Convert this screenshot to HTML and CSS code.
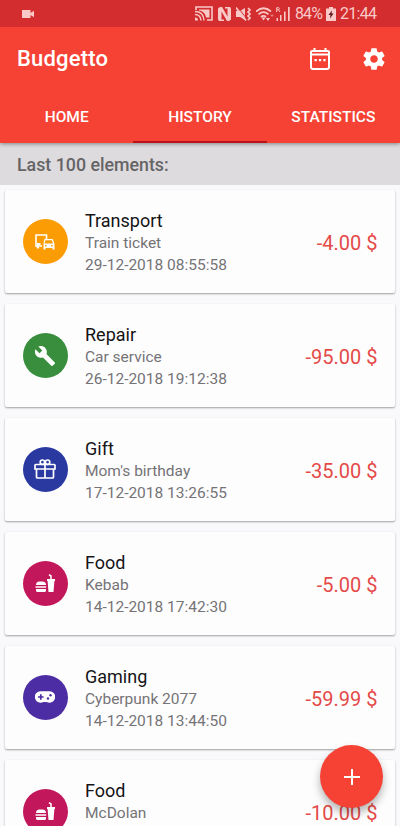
FILE: index.html
```html
<!DOCTYPE html>
<html lang="en">
<head>
<meta charset="utf-8">
<title>Budgetto</title>
<link rel="stylesheet" href="styles.css">
</head>
<body>
<div class="app">
  <header class="header">
    <div class="status">
      <svg class="rec" viewBox="0 0 12 8"><path d="M0 0h8.500v3L12 .8v6.400L8.500 5v3H0z"/></svg>
      <div class="status-right">
        <svg width="18" height="15" viewBox="0 0 18 15"><path d="M1 4V1h16v13h-5" fill="none" stroke="currentColor" stroke-width="1.600"/><path d="M4 3.500h10.500v8H11C10.500 7.500 8 5 4 4.500z"/><path d="M0 5.500q8.500 0 9 9M0 8.500q5.500 0 6 6" fill="none" stroke="currentColor" stroke-width="1.400"/><path d="M0 11.500q3 0 3 3H0z"/></svg>
        <svg class="nfc" width="13" height="14" viewBox="0 0 13 14"><path d="M0 1.500Q2-.5 4 0L9.500 9.500V1.500L7 1.500V0h4.500Q13 0 13 2v10.500Q11 14.500 9 14L3.500 4.500v8H6V14H1.500Q0 14 0 12z"/></svg>
        <svg class="mute" width="15" height="14" viewBox="0 0 15 14"><path d="M0 4h4L9 1v12L4 10H0z"/><path d="M1.500 0l9.500 12" stroke="#d32d2f" stroke-width="1"/><path d="M0 .5l10 13M12 1l2 2-2 2 2 2-2 2 2 2-2 2" fill="none" stroke="currentColor" stroke-width="1.700"/></svg>
        <svg class="wifi" width="18" height="14" viewBox="0 0 18 14"><path d="M0 4.500q7.500-6.500 15 0M2.500 7.300q5-4.300 10 0M5 10q2.500-2.200 5 0" fill="none" stroke="currentColor" stroke-width="1.700"/><path d="M5.500 10.500h4l-2 3zM10 11h4l-2 3z"/><path d="M14.500 8.500h3M16 7v3" stroke="currentColor" opacity=".5"/></svg>
        <svg class="signal" width="14" height="14" viewBox="0 0 14 14"><path d="M.7 5V.7h2q1.500 1 0 2H1M2.500 3L4 5" fill="none" stroke="currentColor"/><path d="M.5 11h1.500v3H.5zM4 8h1.500v6H4zM8 4.500h1.600V14H8zM12 0h1.700v14H12z"/></svg>
        <span class="pct">84%</span>
        <svg class="battery" width="10" height="14" viewBox="0 0 10 14"><path d="M3 0h4v1.500h3V14H0V1.500h3z"/><path d="M6 3.500L2.500 8h2L4 11.500l3.500-5h-2z" fill="#5d1518"/></svg>
        <span class="time">21:44</span>
      </div>
    </div>
    <div class="toolbar">
      <h1>Budgetto</h1>
      <div class="actions">
        <svg class="calendar" width="20" height="22" viewBox="0 0 20 22"><path fill="none" stroke="currentColor" stroke-width="2" d="M2 3h16q1 0 1 1v15q0 2-2 2H3q-2 0-2-2V4q0-1 1-1zM1 6.500h18M4.500 0v4M15.500 0v4"/><path d="M4.500 11h2.300v2.200H4.500zM8.900 11h2.300v2.200H8.900zM13.300 11h2.300v2.200h-2.300z"/></svg>
        <svg class="gear" width="26" height="26" viewBox="0 0 24 24"><path d="M19.430 12.980c.04-.32.07-.64.07-.98s-.03-.66-.07-.98l2.110-1.650c.19-.15.24-.42.12-.64l-2-3.460c-.12-.22-.39-.3-.61-.22l-2.490 1c-.52-.4-1.080-.73-1.690-.98l-.38-2.650C14.460 2.180 14.250 2 14 2h-4c-.25 0-.46.18-.49.42l-.38 2.650c-.61.25-1.170.59-1.690.98l-2.490-1c-.23-.09-.49 0-.61.22l-2 3.460c-.13.22-.07.49.12.64l2.110 1.650c-.04.32-.07.65-.07.98s.03.66.07.98l-2.110 1.650c-.19.15-.24.42-.12.64l2 3.460c.12.22.39.3.61.22l2.490-1c.52.4 1.080.73 1.690.98l.38 2.650c.03.24.24.42.49.42h4c.25 0 .46-.18.49-.42l.38-2.650c.61-.25 1.170-.59 1.690-.98l2.490 1c.23.09.49 0 .61-.22l2-3.460c.12-.22.07-.49-.12-.64l-2.110-1.650zM12 15.500c-1.930 0-3.500-1.570-3.500-3.500s1.570-3.500 3.500-3.500 3.500 1.570 3.500 3.500-1.570 3.500-3.500 3.500z"/></svg>
      </div>
    </div>
    <nav class="tabs">
      <a class="tab">HOME</a>
      <a class="tab active">HISTORY</a>
      <a class="tab">STATISTICS</a>
    </nav>
  </header>
  <h2 class="summary">Last 100 elements:</h2>
  <main class="list">
    <article class="card">
      <span class="badge transport"><svg width="20" height="16" viewBox="0 0 20 16"><path d="M7 12H1V1h10.500v4" fill="none" stroke="currentColor" stroke-width="1.600"/><path d="M1 11h3v3.500H2zM2 9h3.500v2H2z"/><path d="M10 5h7.200q.6 0 .8.600L19.500 10v5.500h-2V14h-7v1.500h-2V10L9.200 5.600Q9.400 5 10 5zm.4 1.200L9.500 9.500H18l-1.200-3.300z" fill-rule="evenodd"/><path d="M10 11h1.500v1.500H10zM16.200 11h1.500v1.500h-1.500z" fill="#fb9c04"/></svg></span>
      <div class="info"><h3>Transport</h3><p>Train ticket</p><p>29-12-2018 08:55:58</p></div>
      <span class="amount">-4.00 $</span>
    </article>
    <article class="card">
      <span class="badge repair"><svg width="22" height="22" viewBox="0 0 24 24"><path d="M22.700 19l-9.100-9.100c.9-2.300.4-5-1.500-6.900-2-2-5-2.400-7.400-1.300L9 6 6 9 1.600 4.700C.4 7.100.9 10.100 2.900 12.100c1.900 1.900 4.600 2.400 6.900 1.500l9.100 9.100c.4.4 1 .4 1.400 0l2.300-2.300c.5-.4.5-1.100.1-1.400z"/></svg></span>
      <div class="info"><h3>Repair</h3><p>Car service</p><p>26-12-2018 19:12:38</p></div>
      <span class="amount">-95.00 $</span>
    </article>
    <article class="card">
      <span class="badge gift"><svg width="22" height="20" viewBox="0 0 22 20"><path d="M1.800 5.500h18.400q.8 0 .8.800V10H1V6.300q0-.8.800-.8zM2.500 10v8q0 1 1 1h15q1 0 1-1v-8M11 5.500V19" fill="none" stroke="currentColor" stroke-width="1.700"/><circle cx="8.400" cy="3.200" r="2.200" fill="none" stroke="currentColor" stroke-width="1.700"/><circle cx="13.600" cy="3.200" r="2.200" fill="none" stroke="currentColor" stroke-width="1.700"/></svg></span>
      <div class="info"><h3>Gift</h3><p>Mom's birthday</p><p>17-12-2018 13:26:55</p></div>
      <span class="amount">-35.00 $</span>
    </article>
    <article class="card">
      <span class="badge food"><svg width="20" height="18" viewBox="0 0 20 18"><path d="M1 11q0-3.500 3.500-3.500h3q3.500 0 3.500 3.500zM.5 12.200h10.700v1.600H.5zM1 15h10v1.500Q11 18 9.500 18h-7Q1 18 1 16.500z"/><path d="M12 5h8v2h-.6L18.500 18h-5L12.600 7H12z"/><path d="M16 5V2l-2-1.300" fill="none" stroke="currentColor" stroke-width="1.500"/></svg></span>
      <div class="info"><h3>Food</h3><p>Kebab</p><p>14-12-2018 17:42:30</p></div>
      <span class="amount">-5.00 $</span>
    </article>
    <article class="card">
      <span class="badge gaming"><svg width="20" height="12" viewBox="0 0 20 12"><path d="M5.800.2h8.400A5.800 5.800 0 1 1 11.500 11h-3A5.800 5.800 0 1 1 5.800.2z"/><path d="M3 6h5.600M5.800 3.200v5.600" stroke="#4d2da3" stroke-width="1.700"/><circle cx="15.500" cy="4.300" r="1.200" fill="#4d2da3"/><circle cx="13" cy="7.500" r="1.200" fill="#4d2da3"/></svg></span>
      <div class="info"><h3>Gaming</h3><p>Cyberpunk 2077</p><p>14-12-2018 13:44:50</p></div>
      <span class="amount">-59.99 $</span>
    </article>
    <article class="card">
      <span class="badge food"><svg width="20" height="18" viewBox="0 0 20 18"><path d="M1 11q0-3.500 3.500-3.500h3q3.500 0 3.500 3.500zM.5 12.200h10.700v1.600H.5zM1 15h10v1.500Q11 18 9.500 18h-7Q1 18 1 16.500z"/><path d="M12 5h8v2h-.6L18.500 18h-5L12.600 7H12z"/><path d="M16 5V2l-2-1.300" fill="none" stroke="currentColor" stroke-width="1.500"/></svg></span>
      <div class="info"><h3>Food</h3><p>McDolan</p></div>
      <span class="amount">-10.00 $</span>
    </article>
  </main>
  <button class="fab" aria-label="Add"><svg width="16" height="16" viewBox="0 0 16 16"><path d="M8 0v16M0 8h16" stroke="currentColor" stroke-width="2"/></svg></button>
</div>
</body>
</html>
```
FILE: styles.css
```css
* { box-sizing: border-box; }
body { margin: 0; font-family: Roboto, sans-serif; background: #f9f8fb; }
svg { fill: currentColor; flex: none; display: block; }
h1, h2, h3, p { margin: 0; }
.app { position: relative; height: 826px; overflow: hidden; display: flex; flex-direction: column; }
.header { position: relative; z-index: 1; flex: none; height: 143px; background: #f54234; color: #fff; box-shadow: 0 1px 4px rgba(0, 0, 0, .4); }
.status { height: 27px; padding: 0 23px 0 22px; background: #d32d2f; color: #f9c9c8; display: flex; align-items: center; justify-content: space-between; }
.rec { width: 12px; height: 8px; }
.status-right { display: flex; align-items: center; width: 182px; font-size: 16px; line-height: 27px; }
.nfc { margin-left: 5px; }
.mute { margin-left: 5px; }
.wifi { margin-left: 5px; }
.signal { margin-left: 2px; }
.pct { margin-left: 5px; width: 27px; letter-spacing: -.9px; }
.battery { margin-left: 4px; }
.time { margin-left: 4px; letter-spacing: -.7px; }
.toolbar { height: 64px; padding: 0 13px 0 17px; display: flex; align-items: center; justify-content: space-between; }
h1 { font-size: 22px; line-height: 28px; font-weight: 500; letter-spacing: .2px; }
.actions { display: flex; align-items: center; gap: 31px; }
.tabs { height: 52px; display: grid; grid-template-columns: repeat(3, 1fr); }
.tab { display: flex; align-items: center; justify-content: center; padding-bottom: 1px; font-size: 15.500px; font-weight: 500; }
.active { box-shadow: inset 0 -2px #b91419; }
.summary { flex: none; height: 42px; padding: 1px 17px 0; background: #dddbde; color: #656466; font-size: 17.800px; line-height: 42px; font-weight: 500; }
.list { padding: 5.200px 5px 0; display: flex; flex-direction: column; gap: 10.900px; }
.card { flex: none; height: 103px; padding: 0 17.500px; background: #fefdfe; border-radius: 2px; box-shadow: 0 1px 2px rgba(0, 0, 0, .36); display: flex; align-items: center; }
.badge { width: 45px; height: 45px; border-radius: 50%; color: #fff; display: flex; align-items: center; justify-content: center; }
.transport { background: #fb9c04; }
.repair { background: #388e3c; }
.gift { background: #2939a0; }
.food { background: #c2185b; }
.gaming { background: #4d2da3; }
.info { align-self: flex-start; flex: 1; margin: 19.200px 0 0 17.500px; color: #747376; font-size: 15.500px; line-height: 22px; }
h3 { color: #151416; font-size: 18px; line-height: 23px; font-weight: 400; }
.amount { padding-top: 3px; color: #e44a48; font-size: 20px; line-height: 24px; }
.fab { position: absolute; right: 17px; bottom: 18px; z-index: 2; width: 63px; height: 63px; padding: 0; border: 0; border-radius: 50%; background: #f54234; color: #fff; display: flex; align-items: center; justify-content: center; box-shadow: 0 5px 9px rgba(0, 0, 0, .3); }
```
